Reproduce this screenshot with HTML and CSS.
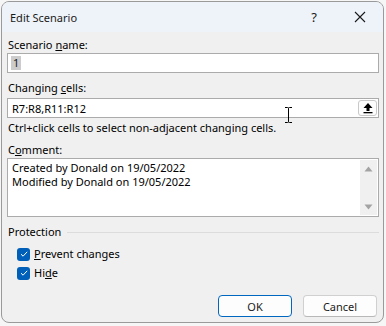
FILE: index.html
```html
<!DOCTYPE html>
<html>
<head>
<meta charset="utf-8">
<link rel="stylesheet" href="styles.css">
</head>
<body>
<div class="dialog">
  <div class="titlebar">
    <span class="title">Edit Scenario</span>
    <span class="cap-btn help">?</span>
    <span class="cap-btn close">
      <svg width="12" height="12" viewBox="0 0 12 12"><path d="M1 1L11 11M11 1L1 11" stroke="#1a1a1a" stroke-width="1.1" fill="none"/></svg>
    </span>
  </div>
  <div class="content">
    <div class="label l-name">Scenario <u>n</u>ame:</div>
    <div class="field"><span class="sel">1</span></div>
    <div class="label l-cells">Changing <u>c</u>ells:</div>
    <div class="field field-cells">
      <span class="val">R7:R8,R11:R12</span>
      <span class="ref-btn">
        <svg width="12" height="12" viewBox="0 0 12 12"><path d="M6 1L10.5 6H7.5V9H4.5V6H1.5Z" fill="#000"/><rect x="1.5" y="10" width="9" height="1.3" fill="#000"/></svg>
      </span>
      <svg class="ibeam" width="9" height="18" viewBox="0 0 9 18"><path d="M1 1.5H3.5Q4.5 1.5 4.5 2.5V15.5Q4.5 16.5 3.5 16.5H1M8 1.5H5.5Q4.5 1.5 4.5 2.5M4.5 15.5Q4.5 16.5 5.5 16.5H8" stroke="#000" stroke-width="1" fill="none"/></svg>
    </div>
    <div class="hint">Ctrl+click cells to select non-adjacent changing cells.</div>
    <div class="label l-comment">C<u>o</u>mment:</div>
    <div class="textarea">
      <div class="ta-text"><div class="ta-line">Created by Donald on 19/05/2022</div><div class="ta-line">Modified by Donald on 19/05/2022</div></div>
      <div class="scroll">
        <svg width="9" height="6" viewBox="0 0 9 6"><path d="M0.5 5.5L4.5 0.5L8.5 5.5Z" fill="#a3a3a3"/></svg>
        <svg width="9" height="6" viewBox="0 0 9 6"><path d="M0.5 0.5L4.5 5.5L8.5 0.5Z" fill="#a3a3a3"/></svg>
      </div>
    </div>
    <div class="group">
      <span>Protection</span><span class="rule"></span>
    </div>
    <div class="checks">
      <div class="check"><span class="box"><svg width="10" height="10" viewBox="0 0 10 10"><path d="M2 5.2L4.1 7.2L8.2 2.8" stroke="#fff" stroke-width="1" fill="none"/></svg></span><u>P</u>revent changes</div>
      <div class="check"><span class="box"><svg width="10" height="10" viewBox="0 0 10 10"><path d="M2 5.2L4.1 7.2L8.2 2.8" stroke="#fff" stroke-width="1" fill="none"/></svg></span>Hi<u>d</u>e</div>
    </div>
    <div class="buttons">
      <button class="btn default">OK</button>
      <button class="btn">Cancel</button>
    </div>
  </div>
</div>
</body>
</html>
```
FILE: styles.css
```css
html, body {
  margin: 0;
  padding: 0;
}
body {
  width: 386px;
  height: 326px;
  background: #f6f6f6;
  font-family: "Noto Sans", "Liberation Sans", sans-serif;
  font-size: 11px;
  color: #000;
  overflow: hidden;
}
.dialog {
  margin: 1px 0 0 1px;
  width: 383px;
  height: 322px;
  border: 1px solid #9a9a9a;
  border-radius: 8px;
  background: #f0f0f0;
  overflow: hidden;
  box-sizing: border-box;
}
.titlebar {
  height: 30px;
  background: #eef2f9;
  display: flex;
  align-items: center;
}
.title {
  margin-left: 8px;
  flex: 1;
  font-size: 11px;
  color: #1a1a1a;
}
.cap-btn {
  width: 46px;
  height: 30px;
  display: flex;
  align-items: center;
  justify-content: center;
  color: #1a1a1a;
  font-size: 13px;
}
.content {
  padding: 0 4px 0 5px;
}
.label {
  height: 14px;
  line-height: 14px;
  padding-left: 1px;
}
.l-name { margin-top: 6px; margin-bottom: 1px; }
.l-cells { margin-top: 8px; margin-bottom: 3px; }
.l-comment { margin-top: 8px; margin-bottom: 1px; }
.field {
  height: 20px;
  border: 1px solid #ababab;
  background: #fff;
  box-sizing: border-box;
  display: flex;
  align-items: center;
  padding-left: 3px;
  position: relative;
}
.sel {
  background: #cccccc;
  padding: 0 2px;
  line-height: 14px;
  color: #222;
}
.val { flex: 1; padding-left: 1px; }
.ref-btn {
  width: 19px;
  height: 16px;
  margin-right: 1px;
  border: 1px solid #c9c9c9;
  border-radius: 3px;
  background: #fdfdfd;
  box-sizing: border-box;
  display: flex;
  align-items: center;
  justify-content: center;
}
.ibeam {
  position: absolute;
  left: 276px;
  top: 7px;
}
.hint {
  margin-top: 3px;
  height: 14px;
  line-height: 14px;
  padding-left: 1px;
}
.textarea {
  height: 59px;
  border: 1px solid #ababab;
  background: #fff;
  box-sizing: border-box;
  display: flex;
}
.ta-text {
  flex: 1;
  padding: 2px 4px;
}
.ta-line {
  height: 14px;
  line-height: 14px;
}
.scroll {
  width: 17px;
  margin: 1px 1px 1px 0;
  background: #f0f0f0;
  display: flex;
  flex-direction: column;
  justify-content: space-between;
  align-items: center;
  padding: 6px 0 5px;
  box-sizing: border-box;
}
.group {
  display: flex;
  align-items: center;
  margin-top: 8px;
  height: 14px;
  line-height: 14px;
  padding-left: 1px;
}
.rule {
  flex: 1;
  height: 1px;
  background: #dcdcdc;
  margin-left: 6px;
}
.checks {
  margin-top: 8px;
  padding-left: 10px;
  display: flex;
  flex-direction: column;
  gap: 5px;
}
.check {
  display: flex;
  align-items: center;
  height: 14px;
  line-height: 14px;
}
.box {
  width: 13px;
  height: 13px;
  border-radius: 3px;
  background: #005fb8;
  display: flex;
  align-items: center;
  justify-content: center;
  margin-right: 4px;
}
.buttons {
  display: flex;
  justify-content: flex-end;
  gap: 11px;
  margin-top: 15px;
  padding-right: 2px;
}
.btn {
  width: 74px;
  height: 22px;
  border: 1px solid #d0d0d0;
  border-bottom-color: #b8b8b8;
  border-radius: 4px;
  background: #fdfdfd;
  font-family: inherit;
  font-size: 11px;
  color: #1a1a1a;
  padding: 0;
}
.btn.default {
  border: 1px solid #0067c0;
}
```
